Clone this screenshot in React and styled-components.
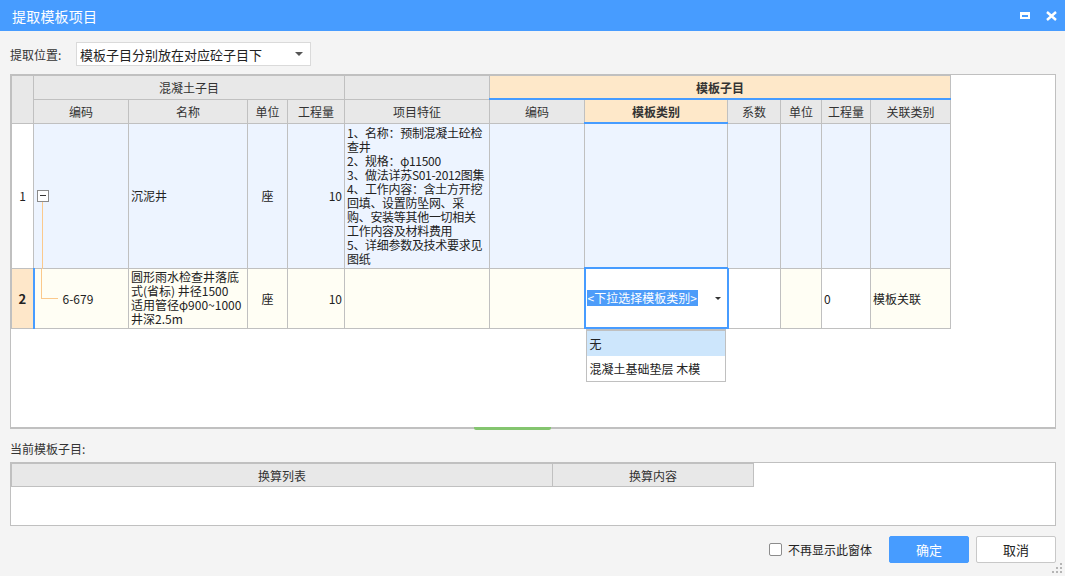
import styled, { createGlobalStyle } from 'styled-components';

const GlobalStyle = createGlobalStyle`
  html, body {
    margin: 0;
    padding: 0;
    background: #f4f4f4;
  }
  body {
    font-family: 'Noto Sans CJK SC', 'Noto Sans', sans-serif;
    color: #333;
  }
`;

const BLUE = '#479cff';
const LINE = '#c0c0c0';

const ROW_BG = {
  blue: '#edf4ff',
  ivory: '#fffef4',
  white: '#ffffff',
  peach: '#fee7c9',
};

const featureLines = [
  '1、名称：预制混凝土砼检',
  '查井',
  '2、规格：φ11500',
  '3、做法详苏S01-2012图集',
  '4、工作内容：含土方开挖',
  '回填、设置防坠网、采',
  '购、安装等其他一切相关',
  '工作内容及材料费用',
  '5、详细参数及技术要求见',
  '图纸',
];

const nameLines = ['圆形雨水检查井落底', '式(省标) 井径1500', '适用管径φ900~1000', '井深2.5m'];

const colWidths = [22, 95, 119, 40, 57, 145, 95, 143, 53, 41, 49, 80];

export default function App() {
  return (
    <>
      <GlobalStyle />
      <Dialog>
        <TitleBar>
          <TitleText>提取模板项目</TitleText>
          <TitleActions>
            <MaxIcon />
            <svg width="11" height="10" viewBox="0 0 11 10">
              <path d="M1 1 L10 9 M10 1 L1 9" stroke="#fff" strokeWidth="2.4" />
            </svg>
          </TitleActions>
        </TitleBar>

        <Body>
          <PositionRow>
            <FieldLabel>提取位置:</FieldLabel>
            <Select>
              <span>模板子目分别放在对应砼子目下</span>
              <Caret />
            </Select>
          </PositionRow>

          <Grid>
            <GridTable style={{ width: 939 }}>
              <colgroup>
                {colWidths.map((w, i) => (
                  <col key={i} style={{ width: w }} />
                ))}
              </colgroup>
              <thead>
                <tr>
                  <HeadCell rowSpan={2} />
                  <HeadCell colSpan={4}>混凝土子目</HeadCell>
                  <HeadCell />
                  <HeadCell colSpan={6} $accent>
                    模板子目
                  </HeadCell>
                </tr>
                <tr>
                  <HeadCell>编码</HeadCell>
                  <HeadCell>名称</HeadCell>
                  <HeadCell>单位</HeadCell>
                  <HeadCell>工程量</HeadCell>
                  <HeadCell>项目特征</HeadCell>
                  <HeadCell>编码</HeadCell>
                  <HeadCell $accent>模板类别</HeadCell>
                  <HeadCell>系数</HeadCell>
                  <HeadCell>单位</HeadCell>
                  <HeadCell>工程量</HeadCell>
                  <HeadCell>关联类别</HeadCell>
                </tr>
              </thead>
              <tbody>
                <BodyRow $h={145}>
                  <Cell $bg="white" $align="center">1</Cell>
                  <Cell $bg="blue">
                    <TreeNode>
                      <Toggle />
                      <TreeDown />
                    </TreeNode>
                  </Cell>
                  <Cell $bg="blue">沉泥井</Cell>
                  <Cell $bg="blue" $align="center">座</Cell>
                  <Cell $bg="blue" $align="right">10</Cell>
                  <Cell $bg="blue">
                    <Lines $tight>
                      {featureLines.map((l, i) => (
                        <div key={i}>{l}</div>
                      ))}
                    </Lines>
                  </Cell>
                  <Cell $bg="blue" />
                  <Cell $bg="blue" />
                  <Cell $bg="blue" />
                  <Cell $bg="blue" />
                  <Cell $bg="blue" />
                  <Cell $bg="blue" />
                </BodyRow>
                <BodyRow $h={60}>
                  <Cell $bg="peach" $align="center" $bold>2</Cell>
                  <Cell $bg="ivory" $marked>
                    <TreeLeaf>
                      <TreeElbow />
                      <span>6-679</span>
                    </TreeLeaf>
                  </Cell>
                  <Cell $bg="ivory">
                    <Lines>
                      {nameLines.map((l, i) => (
                        <div key={i}>{l}</div>
                      ))}
                    </Lines>
                  </Cell>
                  <Cell $bg="ivory" $align="center">座</Cell>
                  <Cell $bg="ivory" $align="right">10</Cell>
                  <Cell $bg="ivory" />
                  <Cell $bg="ivory" />
                  <EditCell>
                    <EditInner>
                      <Highlight>&lt;下拉选择模板类别&gt;</Highlight>
                      <SmallCaret />
                    </EditInner>
                    <DropList>
                      <DropItem $active>无</DropItem>
                      <DropItem>混凝土基础垫层 木模</DropItem>
                    </DropList>
                  </EditCell>
                  <Cell $bg="white" />
                  <Cell $bg="ivory" />
                  <Cell $bg="white">0</Cell>
                  <Cell $bg="ivory">模板关联</Cell>
                </BodyRow>
              </tbody>
            </GridTable>
            <Splitter />
          </Grid>

          <SectionLabel>当前模板子目:</SectionLabel>

          <LowerGrid>
            <GridTable style={{ width: 742 }}>
              <colgroup>
                <col style={{ width: 541 }} />
                <col style={{ width: 201 }} />
              </colgroup>
              <thead>
                <tr>
                  <HeadCell>换算列表</HeadCell>
                  <HeadCell>换算内容</HeadCell>
                </tr>
              </thead>
            </GridTable>
          </LowerGrid>

          <Footer>
            <CheckLabel>
              <CheckBox />
              不再显示此窗体
            </CheckLabel>
            <Button $primary>确定</Button>
            <Button>取消</Button>
          </Footer>
        </Body>

        <Grip width="10" height="10" viewBox="0 0 10 10">
          {[
            [8, 0],
            [8, 4],
            [4, 4],
            [8, 8],
            [4, 8],
            [0, 8],
          ].map(([x, y], i) => (
            <rect key={i} x={x} y={y} width="2" height="2" fill="#b5b5b5" />
          ))}
        </Grip>
      </Dialog>
    </>
  );
}

const Dialog = styled.div`
  position: relative;
  width: 1065px;
  height: 576px;
  overflow: hidden;
  display: flex;
  flex-direction: column;
  background: #f4f4f4;
`;

const TitleBar = styled.div`
  height: 31px;
  flex: none;
  background: ${BLUE};
  display: flex;
  align-items: center;
  justify-content: space-between;
  padding: 0 8px 0 12px;
  color: #fff;
`;

const TitleText = styled.div`
  font-size: 14px;
  letter-spacing: 0.2px;
`;

const TitleActions = styled.div`
  display: flex;
  align-items: center;
  gap: 16px;
`;

const MaxIcon = styled.span`
  display: block;
  width: 6px;
  height: 2px;
  border: 2px solid #fff;
  border-top-width: 3px;
`;

const Body = styled.div`
  flex: 1;
  display: flex;
  flex-direction: column;
  padding: 0 9px 0 10px;
`;

const PositionRow = styled.div`
  margin-top: 11px;
  height: 24px;
  display: flex;
  align-items: center;
`;

const FieldLabel = styled.div`
  width: 66px;
  font-size: 12px;
  color: #333;
`;

const Select = styled.div`
  width: 235px;
  height: 24px;
  box-sizing: border-box;
  border: 1px solid #dadada;
  background: #fff;
  display: flex;
  align-items: center;
  justify-content: space-between;
  padding: 0 7px 0 3px;
  font-size: 13px;
  color: #222;
`;

const Caret = styled.span`
  width: 0;
  height: 0;
  border-left: 4px solid transparent;
  border-right: 4px solid transparent;
  border-top: 4px solid #555;
`;

const Grid = styled.div`
  position: relative;
  margin-top: 8px;
  height: 355px;
  box-sizing: border-box;
  border: 1px solid ${LINE};
  border-bottom-width: 2px;
  background: #fff;
`;

const GridTable = styled.table`
  border-collapse: collapse;
  table-layout: fixed;
  font-size: 12px;
  color: #222;
`;

const HeadCell = styled.th`
  height: 22px;
  padding: 0;
  border: 1px solid ${LINE};
  background: ${(p) => (p.$accent ? '#fee8c9' : '#e8e8e8')};
  border-bottom: ${(p) => (p.$accent ? `2px solid ${BLUE}` : `1px solid ${LINE}`)};
  font-weight: ${(p) => (p.$accent ? 'bold' : 'normal')};
  font-size: 12px;
  color: #333;
  text-align: center;
  white-space: nowrap;
`;

const BodyRow = styled.tr`
  height: ${(p) => p.$h}px;
`;

const Cell = styled.td`
  position: relative;
  padding: 0 2px;
  border: 1px solid ${LINE};
  border-left: ${(p) => (p.$marked ? `2px solid ${BLUE}` : `1px solid ${LINE}`)};
  background: ${(p) => ROW_BG[p.$bg]};
  text-align: ${(p) => p.$align || 'left'};
  font-weight: ${(p) => (p.$bold ? 'bold' : 'normal')};
  font-size: ${(p) => (p.$bold ? '13px' : '12px')};
  vertical-align: middle;
  white-space: nowrap;
  overflow: visible;
`;

const Lines = styled.div`
  line-height: 14px;
  letter-spacing: ${(p) => (p.$tight ? '-0.3px' : '0')};
`;

const TreeNode = styled.div`
  position: relative;
  display: flex;
  align-items: center;
  padding-left: 1px;
`;

const Toggle = styled.span`
  position: relative;
  width: 10px;
  height: 10px;
  border: 1px solid #8a8a8a;
  background: #fff;

  &::after {
    content: '';
    position: absolute;
    left: 2px;
    top: 4px;
    width: 6px;
    height: 1px;
    background: #333;
  }
`;

const TreeDown = styled.span`
  position: absolute;
  left: 6px;
  top: 12px;
  width: 1px;
  height: 80px;
  background: #fbc98c;
`;

const TreeLeaf = styled.div`
  display: flex;
  align-items: center;
  gap: 5px;
  padding-left: 26px;
  font-size: 12px;
`;

const TreeElbow = styled.span`
  position: absolute;
  left: 6px;
  top: 0;
  width: 16px;
  height: 29px;
  border-left: 1px solid #fbc98c;
  border-bottom: 1px solid #fbc98c;
`;

const EditCell = styled.td`
  position: relative;
  padding: 0;
  border: 2px solid ${BLUE};
  background: #fff;
  vertical-align: middle;
`;

const EditInner = styled.div`
  display: flex;
  align-items: center;
  justify-content: space-between;
  padding: 0 6px 0 1px;
`;

const Highlight = styled.span`
  background: #4d9cf9;
  color: #fff;
  font-size: 12px;
  line-height: 16px;
  padding: 0 1px;
`;

const SmallCaret = styled.span`
  width: 0;
  height: 0;
  border-left: 3px solid transparent;
  border-right: 3px solid transparent;
  border-top: 3px solid #333;
`;

const DropList = styled.div`
  position: absolute;
  z-index: 2;
  top: calc(100% + 2px);
  left: 0;
  width: 140px;
  box-sizing: border-box;
  border: 1px solid ${LINE};
  border-top-width: 2px;
  background: #fff;
`;

const DropItem = styled.div`
  height: 25px;
  line-height: 25px;
  padding: 0 3px;
  font-size: 12px;
  color: #222;
  background: ${(p) => (p.$active ? '#cde6fc' : '#fff')};
  white-space: nowrap;
`;

const Splitter = styled.div`
  position: absolute;
  left: 463px;
  bottom: -3px;
  width: 77px;
  height: 3px;
  border-radius: 0 0 2px 2px;
  background: #84c56f;
`;

const SectionLabel = styled.div`
  height: 33px;
  box-sizing: border-box;
  padding-top: 11px;
  font-size: 12px;
  color: #333;
`;

const LowerGrid = styled.div`
  height: 64px;
  box-sizing: border-box;
  border: 1px solid ${LINE};
  background: #fff;
`;

const Footer = styled.div`
  margin-top: 10px;
  display: flex;
  align-items: center;
  justify-content: flex-end;
  gap: 7px;
`;

const CheckLabel = styled.label`
  display: flex;
  align-items: center;
  gap: 6px;
  margin-right: 10px;
  font-size: 12px;
  color: #222;
`;

const CheckBox = styled.span`
  width: 11px;
  height: 11px;
  border: 1px solid #8c8c8c;
  border-radius: 2px;
  background: #fff;
`;

const Button = styled.button`
  width: 80px;
  height: 27px;
  box-sizing: border-box;
  border-radius: 2px;
  border: 1px solid ${(p) => (p.$primary ? BLUE : '#c8c8c8')};
  background: ${(p) => (p.$primary ? BLUE : '#fff')};
  color: ${(p) => (p.$primary ? '#fff' : '#222')};
  font-family: inherit;
  font-size: 13px;
  padding: 0;
`;

const Grip = styled.svg`
  position: absolute;
  right: 3px;
  bottom: 3px;
`;
